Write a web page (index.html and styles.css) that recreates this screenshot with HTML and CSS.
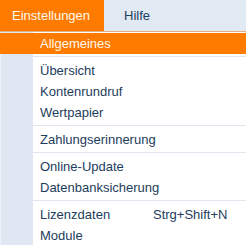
FILE: index.html
```html
<!DOCTYPE html>
<html lang="de">
<head>
  <meta charset="UTF-8">
  <title>Menü</title>
  <link rel="stylesheet" href="styles.css">
</head>
<body>

  <div class="menubar">
    <span class="top open">Einstellungen</span>
    <span class="top">Hilfe</span>
  </div>

  <div class="dropdown">
    <div class="item active">Allgemeines</div>
    <div class="sep"></div>
    <div class="item">Übersicht</div>
    <div class="item">Kontenrundruf</div>
    <div class="item">Wertpapier</div>
    <div class="sep"></div>
    <div class="item">Zahlungserinnerung</div>
    <div class="sep"></div>
    <div class="item">Online-Update</div>
    <div class="item">Datenbanksicherung</div>
    <div class="sep"></div>
    <div class="item"><span class="label">Lizenzdaten</span><span class="key">Strg+Shift+N</span></div>
    <div class="item">Module</div>
  </div>

</body>
</html>
```

FILE: styles.css
```css
* { box-sizing: border-box; }

body {
  margin: 0;
  font-family: 'Liberation Sans', Arial, sans-serif;
  font-size: 13px;
  background: #ffffff;
}

.menubar {
  display: flex;
  height: 32px;
  background: #e1e9f3;
  border-bottom: 1px solid #e3ad88;
}

.top {
  display: flex;
  align-items: center;
  padding: 0 12px;
  color: #1d3d5c;
  width: 104px;
}

.top.open {
  background: #ff7b00;
  color: #fff8ec;
}

.top + .top {
  padding-left: 20px;
}

.dropdown {
  display: flex;
  flex-direction: column;
  padding-top: 1px;
  border-left: 1px solid #eef3f9;
  background: linear-gradient(to right, #dfe7f2 0, #dfe7f2 32px, #ffffff 32px);
}

.item {
  display: flex;
  align-items: center;
  height: 21px;
  padding-left: 39px;
  color: #1d3d5c;
}

.item.active {
  margin-left: -1px;
  padding-left: 40px;
  background: #ff7b00;
  color: #fff8ec;
}

.label {
  width: 113px;
}

.sep {
  height: 6px;
  margin-left: 32px;
  padding-top: 2px;
}

.sep::after {
  content: "";
  display: block;
  height: 1px;
  background: #dfe6ef;
}
```
